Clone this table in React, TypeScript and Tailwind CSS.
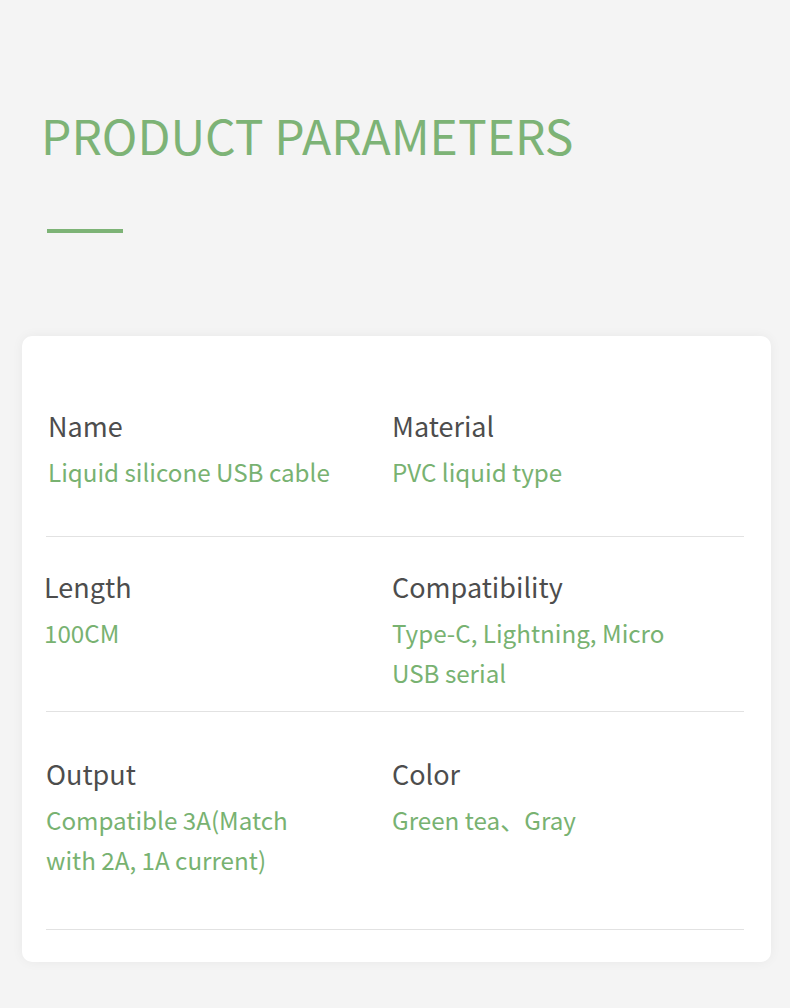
type Param = {
    label: string;
    value: string[];
};

type Row = {
    cells: [Param, Param];
    // per-row spacing, the original layout is not perfectly even
    top: string;
    bottom: string;
    shift: string;
};

const rows: Row[] = [
    {
        cells: [
            { label: 'Name', value: ['Liquid silicone USB cable'] },
            { label: 'Material', value: ['PVC liquid type'] },
        ],
        top: 'pt-[72px]',
        bottom: 'pb-[44px]',
        shift: 'pl-[2px]',
    },
    {
        cells: [
            { label: 'Length', value: ['100CM'] },
            { label: 'Compatibility', value: ['Type-C, Lightning, Micro', 'USB serial'] },
        ],
        top: 'pt-[32px]',
        bottom: 'pb-[18px]',
        shift: '-ml-[2px]',
    },
    {
        cells: [
            { label: 'Output', value: ['Compatible 3A(Match', 'with 2A, 1A current)'] },
            { label: 'Color', value: ['Green tea、Gray'] },
        ],
        top: 'pt-[44px]',
        bottom: 'pb-[49px]',
        shift: 'pl-0',
    },
];

function ParamCell({ param, className }: { param: Param; className?: string }) {
    return (
        <div className={className}>
            <p className="text-[27px] leading-[36px] text-[#4d4d4d]">{param.label}</p>
            <div className="mt-2 text-[24.2px] leading-[40px] text-[#78b271]">
                {param.value.map((line) => (
                    <p key={line}>{line}</p>
                ))}
            </div>
        </div>
    );
}

export default function App() {
    return (
        <div
            className="min-h-[1008px] w-[790px] bg-[#f4f4f4] pt-[102px] pb-[47px]"
            style={{ fontFamily: '"Noto Sans CJK SC", "Noto Sans", sans-serif' }}
        >
            {/* Header */}
            <div className="pl-[41px]">
                <h1 className="text-[48px] leading-[64px] font-normal text-[#7db376]">PRODUCT PARAMETERS</h1>
            </div>
            <div className="ml-[47px] mt-[63px] h-1 w-[76px] bg-[#7db376]" />

            {/* Parameters card */}
            <div className="mx-[22px] mt-[103px] w-[749px] rounded-[10px] bg-white pl-6 pr-[27px] shadow-[0_0_12px_rgba(0,0,0,0.05)]">
                {rows.map((row, i) => (
                    <div key={i}>
                        <div className={`grid grid-cols-[346px_1fr] ${row.top} ${row.bottom}`}>
                            <ParamCell param={row.cells[0]} className={row.shift} />
                            <ParamCell param={row.cells[1]} />
                        </div>
                        <div className="h-px bg-[#e2e2e2]" />
                    </div>
                ))}
                <div className="h-[32px]" />
            </div>
        </div>
    );
}
